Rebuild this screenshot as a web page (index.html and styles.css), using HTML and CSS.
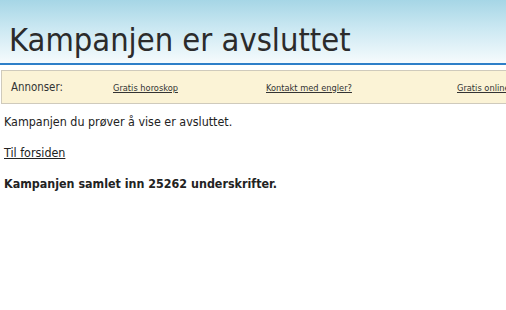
FILE: index.html
```html
<!DOCTYPE html>
<html lang="no">
<head>
<meta charset="utf-8">
<title>Kampanjen er avsluttet</title>
<link rel="stylesheet" href="styles.css">
</head>
<body>
<div class="header">
  <h1 class="title">Kampanjen er avsluttet</h1>
</div>
<div class="ads">
  <span class="ads-label">Annonser:</span>
  <a class="ad ad1" href="#">Gratis horoskop</a>
  <a class="ad ad2" href="#">Kontakt med engler?</a>
  <a class="ad ad3" href="#">Gratis online</a>
</div>
<div class="content">
  <p class="msg">Kampanjen du prøver å vise er avsluttet.</p>
  <p class="msg"><a class="home" href="#">Til forsiden</a></p>
  <p class="msg total">Kampanjen samlet inn 25262 underskrifter.</p>
</div>
</body>
</html>
```

FILE: styles.css
```css
html, body {
  margin: 0;
  padding: 0;
  background: #ffffff;
  width: 506px;
  overflow: hidden;
  font-family: "DejaVu Sans Condensed", "DejaVu Sans", sans-serif;
  color: #222222;
}
.header {
  height: 65px;
  background: linear-gradient(to bottom, #a6d6e6 0%, #cbe8f2 45%, #f6fbfd 100%);
  border-bottom: 2px solid #2d7fc8;
  display: flex;
  align-items: flex-end;
  padding-left: 9px;
  box-sizing: border-box;
}
.title {
  margin: 0 0 3px 0;
  font-weight: normal;
  font-size: 32.4px;
  line-height: 40px;
  color: #2b2b2b;
  white-space: nowrap;
}
.ads {
  margin-top: 5px;
  height: 34px;
  box-sizing: border-box;
  margin-left: 1px;
  width: 520px;
  background: #fbf3d6;
  border: 1px solid #cfcabc;
  display: flex;
  align-items: center;
  white-space: nowrap;
}
.ads-label {
  margin-left: 9px;
  font-size: 11.4px;
  color: #333333;
  width: 102px;
}
.ad {
  font-size: 9.2px;
  color: #333333;
  text-decoration: underline;
}
.ad1 { width: 153px; }
.ad2 { width: 191px; }
.content {
  padding: 10px 4px;
}
.msg {
  margin: 0 0 15px 0;
  font-size: 12.4px;
  line-height: 16px;
  color: #222222;
}
.home {
  color: #222222;
  text-decoration: underline;
}
.total {
  font-weight: bold;
}
```
